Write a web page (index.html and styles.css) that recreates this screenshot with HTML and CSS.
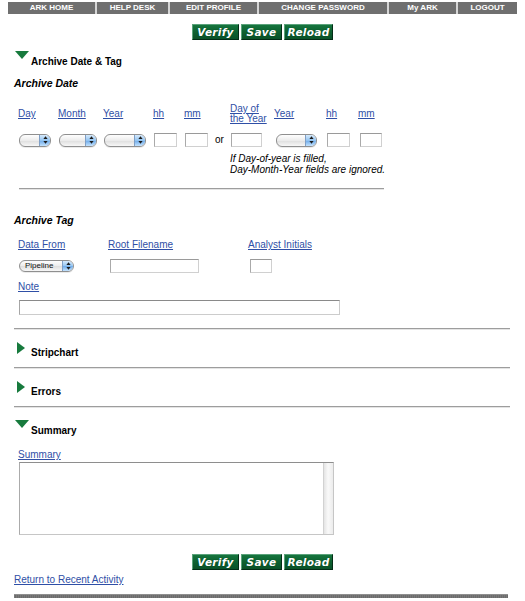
FILE: index.html
```html
<!DOCTYPE html>
<html lang="en">
<head>
<meta charset="utf-8">
<title>Archive Entry</title>
<link rel="stylesheet" href="styles.css">
</head>
<body>
<nav class="topnav">
  <a href="#">ARK HOME</a>
  <a href="#">HELP DESK</a>
  <a href="#">EDIT PROFILE</a>
  <a href="#">CHANGE PASSWORD</a>
  <a href="#">My ARK</a>
  <a href="#">LOGOUT</a>
</nav>

<div class="actions actions-top">
  <button class="btn btn-verify" type="button">Verify</button>
  <button class="btn btn-save" type="button">Save</button>
  <button class="btn btn-reload" type="button">Reload</button>
</div>

<main class="page">
  <section class="panel panel-first">
    <h2 class="panel-head"><span class="tri tri-down"></span><span class="label">Archive Date &amp; Tag</span></h2>

    <h3 class="sub">Archive Date</h3>
    <div class="date-grid">
      <a href="#" class="lbl">Day</a>
      <a href="#" class="lbl">Month</a>
      <a href="#" class="lbl">Year</a>
      <a href="#" class="lbl">hh</a>
      <a href="#" class="lbl">mm</a>
      <span></span>
      <a href="#" class="lbl">Day of<br>the Year</a>
      <a href="#" class="lbl">Year</a>
      <a href="#" class="lbl">hh</a>
      <a href="#" class="lbl">mm</a>

      <span class="picker w-day"><span class="picker-btn"><svg width="5" height="8" viewBox="0 0 5 8"><path d="M2.5 0.3L4.6 3H0.4Z M2.5 7.7L4.6 5H0.4Z" fill="#1c1c1c"/></svg></span></span>
      <span class="picker w-month"><span class="picker-btn"><svg width="5" height="8" viewBox="0 0 5 8"><path d="M2.5 0.3L4.6 3H0.4Z M2.5 7.7L4.6 5H0.4Z" fill="#1c1c1c"/></svg></span></span>
      <span class="picker w-year"><span class="picker-btn"><svg width="5" height="8" viewBox="0 0 5 8"><path d="M2.5 0.3L4.6 3H0.4Z M2.5 7.7L4.6 5H0.4Z" fill="#1c1c1c"/></svg></span></span>
      <input class="field w-hh" type="text">
      <input class="field w-hh" type="text">
      <span class="or">or</span>
      <input class="field w-doy" type="text">
      <span class="picker w-year2 shift"><span class="picker-btn"><svg width="5" height="8" viewBox="0 0 5 8"><path d="M2.5 0.3L4.6 3H0.4Z M2.5 7.7L4.6 5H0.4Z" fill="#1c1c1c"/></svg></span></span>
      <input class="field w-hh" type="text">
      <input class="field w-mm2 shift" type="text">
    </div>
    <p class="hint">If Day-of-year is filled,<br>Day-Month-Year fields are ignored.</p>
    <hr class="inner-rule">

    <h3 class="sub sub-tag">Archive Tag</h3>
    <div class="tag-grid">
      <a href="#" class="lbl">Data From</a>
      <a href="#" class="lbl">Root Filename</a>
      <a href="#" class="lbl">Analyst Initials</a>
      <span class="picker picker-text w-pipe"><span class="picker-val">Pipeline</span><span class="picker-btn"><svg width="5" height="8" viewBox="0 0 5 8"><path d="M2.5 0.3L4.6 3H0.4Z M2.5 7.7L4.6 5H0.4Z" fill="#1c1c1c"/></svg></span></span>
      <input class="field w-root shift" type="text">
      <input class="field w-init shift" type="text">
    </div>
    <div class="note">
      <a href="#" class="lbl">Note</a>
      <input class="field w-note" type="text">
    </div>
  </section>

  <hr class="rule">

  <section class="panel panel-closed">
    <h2 class="panel-head"><span class="tri tri-right"></span><span class="label">Stripchart</span></h2>
  </section>

  <hr class="rule">

  <section class="panel panel-closed">
    <h2 class="panel-head"><span class="tri tri-right"></span><span class="label">Errors</span></h2>
  </section>

  <hr class="rule">

  <section class="panel panel-last">
    <h2 class="panel-head"><span class="tri tri-down"></span><span class="label">Summary</span></h2>
    <div class="summary">
      <a href="#" class="lbl">Summary</a>
      <div class="memo"><textarea aria-label="Summary"></textarea><span class="track"></span></div>
    </div>
  </section>
</main>

<div class="actions actions-bottom">
  <button class="btn btn-verify" type="button">Verify</button>
  <button class="btn btn-save" type="button">Save</button>
  <button class="btn btn-reload" type="button">Reload</button>
</div>

<footer class="foot">
  <a href="#" class="lbl">Return to Recent Activity</a>
  <div class="footbar"></div>
</footer>
</body>
</html>
```

FILE: styles.css
```css
* { box-sizing: border-box; }

body {
  margin: 0;
  background: #fff;
  color: #000;
  font-family: "Liberation Sans", Arial, Helvetica, sans-serif;
  font-size: 10px;
}

a { color: #2f4fa6; }

/* top navigation strip */
.topnav {
  display: grid;
  grid-template-columns: 87px 71px 87px 128px 67px 59px;
  gap: 2px;
  width: 509px;
  height: 12px;
  margin: 2px 0 0 8px;
  background: #d6d6d6;
}
.topnav a {
  background: #6f6f6f;
  color: #fff;
  font-size: 8px;
  font-weight: bold;
  line-height: 12px;
  text-align: center;
  text-decoration: none;
}

/* green action buttons */
.actions {
  display: flex;
  justify-content: center;
  gap: 2px;
}
.actions-top { margin-top: 10px; }
.actions-bottom { margin-top: 19px; }

.btn {
  height: 16px;
  padding: 0;
  border: 1px solid;
  border-color: #5aa27a #032c16 #032c16 #5aa27a;
  background: linear-gradient(#16753e, #0d5f2f 55%, #0a5128);
  color: #fff;
  font: italic bold 10.5px/14px "DejaVu Sans", Verdana, sans-serif;
  letter-spacing: 0.3px;
  text-shadow: 0 0 1px #053a1c;
}
.btn-verify { width: 47px; }
.btn-save { width: 41px; }
.btn-reload { width: 49px; }

/* main column */
.page {
  width: 496px;
  margin-left: 14px;
}

.panel-first { padding-top: 11px; }
.panel-closed { padding: 12px 0 9px; }
.panel-last { padding-top: 12px; }

.panel-head {
  display: flex;
  align-items: flex-end;
  height: 16px;
  margin: 0;
  font-size: 10px;
  font-weight: bold;
}
.panel-head .label { line-height: 10px; }

.tri { align-self: flex-start; flex: none; }
.tri-down {
  width: 0;
  height: 0;
  margin: 0 2px 0 1px;
  border-left: 7px solid transparent;
  border-right: 7px solid transparent;
  border-top: 8px solid #177a3d;
}
.tri-right {
  width: 0;
  height: 0;
  margin: 0 6px 0 3px;
  border-top: 6.5px solid transparent;
  border-bottom: 6.5px solid transparent;
  border-left: 8px solid #177a3d;
}

.sub {
  margin: 10px 0 0;
  font-size: 10.5px;
  font-style: italic;
  font-weight: bold;
  line-height: 12px;
}
.sub-tag { margin-top: 24px; }

.lbl { line-height: 12px; }

/* date fields table */
.date-grid {
  display: grid;
  grid-template-columns: 40px 45px 50px 31px 30px 16px 44px 52px 32px 30px;
  grid-template-rows: 20px 14px;
  row-gap: 9px;
  align-items: center;
  justify-items: start;
  margin: 15px 0 0 4px;
}
.date-grid .lbl { line-height: 10px; }
.or { line-height: 14px; padding-left: 1px; }

.hint {
  margin: 6px 0 0 216px;
  font-style: italic;
  line-height: 11px;
}

.inner-rule,
.rule {
  height: 2px;
  margin: 0;
  border: 0;
  border-top: 1px solid #9d9d9d;
  border-bottom: 1px solid #e4e4e4;
}
.inner-rule { width: 365px; margin: 13px 0 0 5px; }
.rule { width: 496px; margin-top: 13px; }
.panel-closed + .rule,
.panel-closed + .rule { margin-top: 0; }

/* tag fields table */
.tag-grid {
  display: grid;
  grid-template-columns: 90px 140px auto;
  grid-template-rows: 12px 14px;
  row-gap: 8px;
  align-items: center;
  justify-items: start;
  margin: 13px 0 0 4px;
}

.note {
  display: flex;
  flex-direction: column;
  align-items: flex-start;
  margin: 8px 0 0 4px;
}

/* inputs */
.field {
  height: 14px;
  margin: 0 0 0 1px;
  padding: 0 2px;
  border: 1px solid;
  border-color: #9a9a9a #d0d0d0 #d0d0d0 #aaaaaa;
  background: #fff;
  font: 10px "Liberation Sans", Arial, sans-serif;
}
.shift { margin-left: 2px; }
.w-hh { width: 23px; }
.w-doy { width: 31px; }
.w-mm2 { width: 22px; }
.w-root { width: 89px; }
.w-init { width: 22px; }
.w-note {
  width: 321px;
  height: 15px;
  margin-top: 7px;
  border-color: #8a8a8a #cccccc #cccccc #a6a6a6;
}

/* rounded drop-down pickers */
.picker {
  display: inline-flex;
  justify-content: flex-end;
  align-items: stretch;
  height: 13px;
  margin-left: 1px;
  border: 1px solid #8f8f8f;
  border-radius: 6px;
  overflow: hidden;
  background: linear-gradient(#fefefe, #ececec 50%, #dedede 52%, #f7f7f7);
  box-shadow: 0 1px 0 rgba(0, 0, 0, 0.08);
}
.picker-btn {
  display: flex;
  align-items: center;
  justify-content: center;
  width: 11px;
  border-left: 1px solid #7f9fc6;
  background: linear-gradient(#d6eafc, #93c4f1 50%, #6eabea 52%, #c4e2fd);
}
.picker.shift { margin-left: 2px; }
.w-day { width: 32px; }
.w-month { width: 38px; }
.w-year { width: 42px; }
.w-year2 { width: 41px; }
.w-pipe { width: 55px; height: 12px; }
.picker-text { justify-content: space-between; }
.picker-val {
  padding-left: 5px;
  font-size: 8px;
  line-height: 10px;
  color: #111;
}

/* summary */
.summary {
  display: flex;
  flex-direction: column;
  align-items: flex-start;
  margin: 13px 0 0 4px;
}
.memo {
  display: flex;
  width: 315px;
  height: 73px;
  margin: 1px 0 0 1px;
  border: 1px solid;
  border-color: #8e8e8e #c6c6c6 #c6c6c6 #ababab;
  background: #fff;
}
.memo textarea {
  flex: 1;
  padding: 2px;
  border: 0;
  outline: none;
  resize: none;
  overflow: hidden;
  font: 10px "Liberation Sans", Arial, sans-serif;
}
.memo .track {
  width: 10px;
  border-left: 1px solid #d2d2d2;
  background: linear-gradient(90deg, #e4e4e4, #f9f9f9 45%, #ececec);
}

/* footer */
.foot {
  margin: 4px 0 0 14px;
}
.foot .lbl { display: block; width: max-content; }
.footbar {
  width: 494px;
  height: 4px;
  margin-top: 8px;
  background: repeating-linear-gradient(90deg, #7a7a7a 0 1px, #6c6c6c 1px 2px);
  border-top: 1px solid #8f8f8f;
}
```
